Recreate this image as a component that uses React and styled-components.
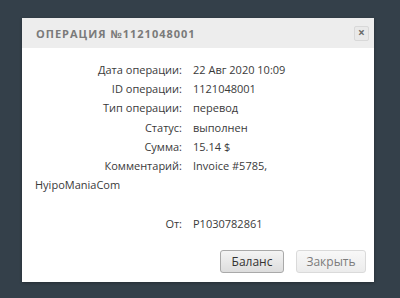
import React from 'react';
import styled, { createGlobalStyle } from 'styled-components';

const GlobalStyle = createGlobalStyle`
    html, body {
        margin: 0;
        padding: 0;
        background: #34404a;
        font-family: "Open Sans", "Liberation Sans", sans-serif;
    }
`;

const Screen = styled.div`
    width: 400px;
    height: 298px;
    padding: 18px 26px 0 22px;
    box-sizing: border-box;
`;

const Dialog = styled.div`
    width: 352px;
    height: 264px;
    background: #fff;
    display: flex;
    flex-direction: column;
    box-shadow: 0 1px 3px rgba(0, 0, 0, 0.3);
`;

const Header = styled.div`
    height: 30px;
    background: #ededed;
    display: flex;
    align-items: center;
    justify-content: space-between;
    padding: 0 5px 0 14px;
`;

const Title = styled.div`
    font-size: 11px;
    font-weight: 700;
    letter-spacing: 1px;
    color: #7a7a7a;
    text-transform: uppercase;
`;

const CloseButton = styled.div`
    width: 15px;
    height: 15px;
    box-sizing: border-box;
    border: 1px solid #d8d8d8;
    background: #e9e9e9;
    border-radius: 2px;
    display: flex;
    align-items: center;
    justify-content: center;
    color: #6b6b6b;
    font-size: 12px;
    font-weight: 700;
    line-height: 1;
`;

const Body = styled.div`
    flex: 1;
    padding: 12px 13px 0 13px;
    font-size: 11px;
    line-height: 19.2px;
    color: #3a3a3a;
`;

const Row = styled.div``;

const Label = styled.span`
    display: inline-block;
    width: 147px;
    text-align: right;
    margin-right: 11px;
`;

const Spacer = styled.div`
    height: 19.2px;
`;

const Footer = styled.div`
    display: flex;
    justify-content: flex-end;
    gap: 12px;
    padding: 0 8px 9px 0;
`;

const Button = styled.button`
    width: ${p => p.$width}px;
    height: 23px;
    padding: 0;
    font-family: inherit;
    font-size: 12px;
    border-radius: 3px;
    border: 1px solid ${p => (p.$primary ? '#a9a9a9' : '#dadada')};
    background: ${p => (p.$primary
        ? 'linear-gradient(#f4f4f4, #dddddd)'
        : 'linear-gradient(#f8f8f8, #ececec)')};
    color: ${p => (p.$primary ? '#333' : '#7b7b7b')};
`;

const rows = [
    ['Дата операции:', '22 Авг 2020 10:09'],
    ['ID операции:', '1121048001'],
    ['Тип операции:', 'перевод'],
    ['Статус:', 'выполнен'],
    ['Сумма:', '15.14 $'],
];

export default function App() {
    return (
        <Screen>
            <GlobalStyle />
            <Dialog>
                <Header>
                    <Title>Операция №1121048001</Title>
                    <CloseButton>×</CloseButton>
                </Header>
                <Body>
                    {rows.map(([label, value]) => (
                        <Row key={label}>
                            <Label>{label}</Label>
                            {value}
                        </Row>
                    ))}
                    <Row>
                        <Label>Комментарий:</Label>
                        Invoice #5785,
                        <br />
                        HyipoManiaCom
                    </Row>
                    <Spacer />
                    <Row>
                        <Label>От:</Label>
                        P1030782861
                    </Row>
                </Body>
                <Footer>
                    <Button $primary $width={64}>Баланс</Button>
                    <Button $width={70}>Закрыть</Button>
                </Footer>
            </Dialog>
        </Screen>
    );
}
